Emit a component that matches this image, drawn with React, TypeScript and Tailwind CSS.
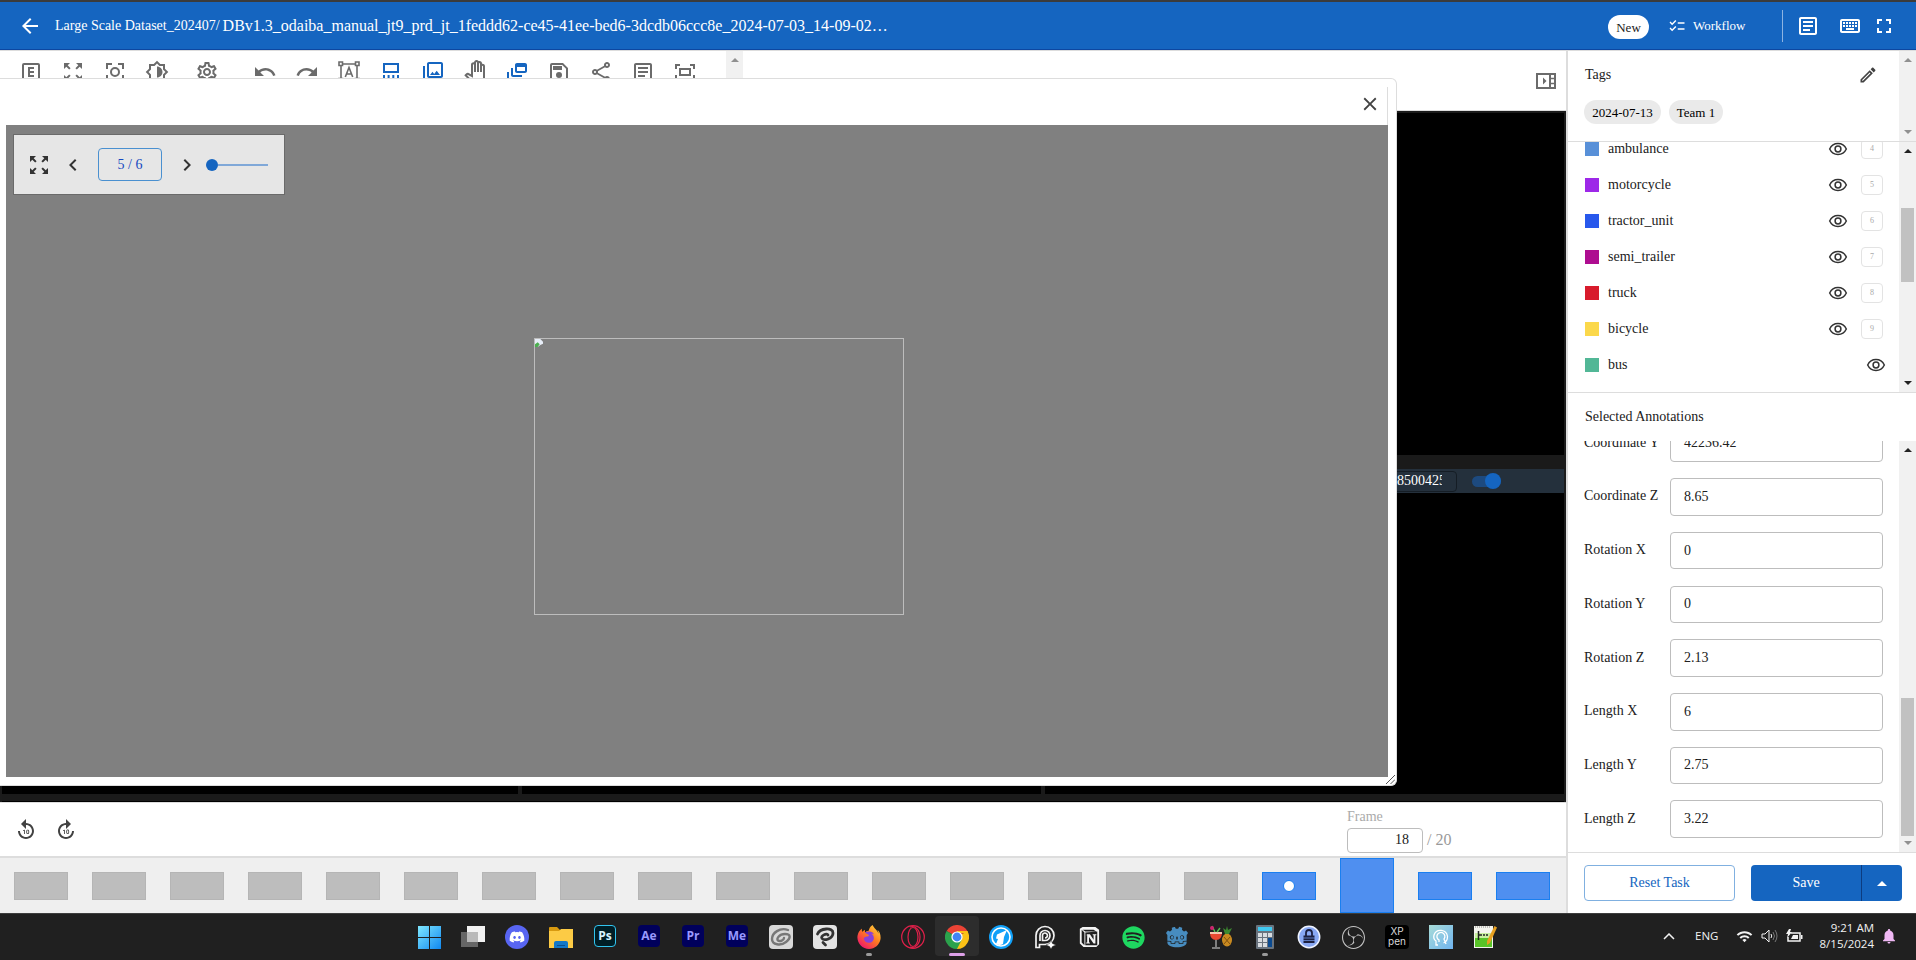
import React from "react";
import {
  MdArrowBack, MdChecklist, MdOutlineArticle, MdOutlineKeyboard, MdFullscreen, MdZoomOutMap,
  MdOutlineBrightness6, MdOutlineSettings, MdUndo, MdRedo, MdOutlinePhotoLibrary,
  MdOutlinePanTool, MdOutlineDynamicFeed, MdOutlineShare, MdClose, MdChevronLeft, MdChevronRight,
  MdForward10, MdReplay10, MdNotifications, MdWifi,
} from "react-icons/md";
import { FaDiscord, FaSpotify } from "react-icons/fa";
import { SiGodotengine, SiObsstudio, SiFirefoxbrowser } from "react-icons/si";

type Kids = { children?: React.ReactNode };

function Svg({ d, className = "size-6" }: { d: string; className?: string }) {
  return (
    <svg viewBox="0 0 24 24" className={className} fill="currentColor" fillRule="evenodd">
      <path d={d} />
    </svg>
  );
}

const BOX_E = "M9 7h6v2h-4v2h4v2h-4v2h4v2H9V7M5 3h14a2 2 0 0 1 2 2v14a2 2 0 0 1-2 2H5a2 2 0 0 1-2-2V5a2 2 0 0 1 2-2m0 2v14h14V5z";
const SAVE = "M5 3h11l5 5v11a2 2 0 0 1-2 2H5a2 2 0 0 1-2-2V5a2 2 0 0 1 2-2m0 2v14h14V8.8L15.200 5zM6 6h9v4H6zM12 12a3 3 0 1 1 0 6a3 3 0 0 1 0-6";
const VIEW_ROWS = "M4 3h16v10H4zm2 2v6h12V5zM4 15h2v6H4zM8.600 15h2v6h-2zM13.300 15h2v6h-2zM18 15h2v6h-2z";
const CENTER_RECT = "M2 4h5v2H4v3H2zM17 4h5v5h-2V6h-3zM2 15h2v3h3v2H2zM20 15h2v5h-5v-2h3zM6 8h12v8H6zm2 2v4h8v-4z";
const PENCIL = "M14.060 9l.94.940L5.920 19H5v-.920L14.060 9m3.600-6c-.250 0-.510.100-.700.290l-1.830 1.830l3.750 3.750l1.830-1.830c.390-.390.390-1.040 0-1.410l-2.340-2.340c-.200-.200-.450-.290-.710-.290m-3.600 3.190L3 17.250V21h3.750L17.810 9.940z";
const NOTION = "M2 3l3-2h14l4 3v16l-3 3H6l-4-4zm2 1v14l3 3V7zm4 3v14h13V6zm-3-3l3 2h12l-3-2zM10 9h3l4 6v-5h-1V9h4v1h-1v9h-2l-5-7v6h1v1h-4v-1h1v-8h-1z";

function Eye({ className }: { className: string }) {
  return (
    <svg viewBox="0 0 24 24" className={`size-5 shrink-0 text-[#333] ${className}`} fill="none" stroke="currentColor" strokeWidth="1.800">
      <path d="M2 12C4 7.700 7.700 5.400 12 5.400S20 7.700 22 12c-2 4.300-5.700 6.600-10 6.600S4 16.300 2 12z" />
      <circle cx="12" cy="12" r="3.500" />
    </svg>
  );
}

function Focus() {
  return (
    <svg viewBox="0 0 24 24" className="size-6" fill="none" stroke="currentColor" strokeWidth="2">
      <path d="M4 9V4h5M15 4h5v5M4 15v5h5M15 20h5v-5" />
      <circle cx="12" cy="12" r="4" />
    </svg>
  );
}

function TextBox() {
  return (
    <svg viewBox="0 0 24 24" className="size-6" fill="none" stroke="currentColor" strokeWidth="1.600">
      <path d="M2 2h3.500v3.500H2zM18.500 2H22v3.500h-3.500zM2 18.500h3.500V22H2zM18.500 18.500H22V22h-3.500zM5.500 4h13M5.500 20h13M4 5.500v13M20 5.500v13M8.300 17L12 7.500L15.700 17M9.500 14h5" />
    </svg>
  );
}

function Arrow({ down, dark }: { down?: boolean; dark?: boolean }) {
  return (
    <svg viewBox="0 0 8 4" className={`h-1 w-2 ${dark ? "text-[#222]" : "text-[#909090]"}`} fill="currentColor">
      <path d={down ? "M0 0h8L4 4z" : "M0 4h8L4 0z"} />
    </svg>
  );
}

function Slot({ w = "w-[42px]", blue, children }: Kids & { w?: string; blue?: boolean }) {
  return <div className={`flex shrink-0 justify-center ${w} ${blue ? "text-[#1565c0]" : "text-[#6b6b6b]"}`}>{children}</div>;
}

function Header() {
  return (
    <header className="flex h-[50px] shrink-0 items-center border-t-2 border-b border-t-[#3b3b3b] border-b-[#0d47a1] bg-[#1565c0] text-white">
      <MdArrowBack className="ml-[18px] size-6" />
      <span className="ml-[13px] text-[14px] whitespace-pre">Large Scale Dataset_202407/</span>
      <span className="ml-[3px] text-[16px]">DBv1.3_odaiba_manual_jt9_prd_jt_1feddd62-ce45-41ee-bed6-3dcdb06ccc8e_2024-07-03_14-09-02…</span>
      <div className="ml-auto flex items-center">
        <span className="mt-[3px] flex h-6 w-[41px] items-center justify-center rounded-full bg-white text-[13px] text-[#212121]">New</span>
        <MdChecklist className="ml-[19px] size-[18px]" />
        <span className="ml-[7px] w-[53px] text-[13px]">Workflow</span>
        <span className="ml-9 h-8 w-px bg-[#8db4e2]" />
        <MdOutlineArticle className="ml-[13px] size-6" />
        <MdOutlineKeyboard className="ml-[18px] size-6" />
        <MdFullscreen className="mr-5 ml-[10px] size-6" />
      </div>
    </header>
  );
}

function Toolbar() {
  return (
    <div className="flex h-[60px] shrink-0 justify-between border-b border-[#ddd]">
      <div className="flex h-full">
        <div className="flex w-[726px] pt-[9px] pl-[10px]">
          <Slot><Svg d={BOX_E} /></Slot>
          <Slot><MdZoomOutMap className="size-6" /></Slot>
          <Slot><Focus /></Slot>
          <Slot><MdOutlineBrightness6 className="size-6" /></Slot>
          <Slot w="w-[58px]"><MdOutlineSettings className="size-6" /></Slot>
          <Slot w="w-[58px]"><MdUndo className="size-6" /></Slot>
          <Slot w="w-[26px]"><MdRedo className="size-6 shrink-0" /></Slot>
          <Slot w="w-[58px]"><TextBox /></Slot>
          <Slot w="w-[26px]" blue><Svg d={VIEW_ROWS} className="size-6 shrink-0" /></Slot>
          <Slot w="w-[58px]" blue><MdOutlinePhotoLibrary className="size-6" /></Slot>
          <Slot w="w-[26px]"><MdOutlinePanTool className="size-6 shrink-0" /></Slot>
          <Slot w="w-[58px]" blue><MdOutlineDynamicFeed className="size-6" /></Slot>
          <Slot w="w-[26px]"><Svg d={SAVE} className="size-6 shrink-0" /></Slot>
          <Slot w="w-[58px]"><MdOutlineShare className="size-6" /></Slot>
          <Slot w="w-[26px]"><MdOutlineArticle className="size-6 shrink-0" /></Slot>
          <Slot w="w-[58px]"><Svg d={CENTER_RECT} /></Slot>
        </div>
        <div className="flex w-[17px] justify-center bg-[#f1f1f1] pt-[7px]"><Arrow /></div>
      </div>
      <svg viewBox="0 0 20 16" className="mt-[22px] mr-[10px] h-4 w-5" fill="none" stroke="#6b6b6b" strokeWidth="2">
        <path d="M1 1h18v14H1zM14 1v14" />
        <path d="M14 5.500h5M14 10.500h5" strokeWidth="1.500" />
        <path d="M7 4.500v7L10.500 8z" fill="#6b6b6b" stroke="none" />
      </svg>
    </div>
  );
}

function Viewer() {
  return (
    <div className="flex flex-1 flex-col border-2 border-b-0 border-[#1b1b1b] bg-black">
      <div className="h-[342px]" />
      <div className="h-[14px] bg-[#1a1a1a]" />
      <div className="flex h-6 items-center justify-end bg-[#24303c] pr-[63px]">
        <div className="flex h-[21px] w-[86px] items-center rounded border border-[#151d25] pr-[14px] text-[14px] text-white">
          <div className="flex w-full justify-end overflow-hidden whitespace-nowrap"><span className="-mr-[4px]">18500425</span></div>
        </div>
        <div className="ml-[15px] flex h-[11px] w-[29px] items-center justify-end rounded-full bg-[#1d4a7f]">
          <span className="size-4 shrink-0 rounded-full bg-[#1565c0]" />
        </div>
      </div>
      <div className="flex flex-1 pl-[516px]">
        <div className="w-1 bg-[#1a1a1a]" />
        <div className="ml-[519px] w-1 bg-[#1a1a1a]" />
      </div>
      <div className="h-[7px] bg-[#1a1a1a]" />
      <div className="h-px bg-black" />
    </div>
  );
}

function Timeline() {
  return (
    <>
      <div className="flex h-[54px] shrink-0 items-center border-t border-[#ddd]">
        <MdReplay10 className="ml-[14px] size-6 text-[#424242]" />
        <MdForward10 className="ml-4 size-6 text-[#424242]" />
        <div className="mt-[3px] ml-auto w-[219px] text-[14px] leading-none text-[#aaa]">
          <div>Frame</div>
          <div className="mt-1 flex items-center text-[16px] text-[#999]">
            <div className="flex h-[25px] w-[76px] items-center justify-end rounded border border-[#bdbdbd] pr-[13px] text-[14px] text-[#212121]">18</div>
            <span className="ml-1">/ 20</span>
          </div>
        </div>
      </div>
      <div className="flex h-[57px] shrink-0 items-center gap-6 border-t-2 border-[#ddd] bg-[#efefef] pl-[14px]">
        {Array.from({ length: 20 }, (_, i) => (
          <div
            key={i}
            className={`flex w-[54px] shrink-0 items-center justify-center border ${i === 17 ? "h-[55px]" : "h-7"} ${i < 16 ? "border-[#b5b5b5] bg-[#bdbdbd]" : "border-[#1a7ff0] bg-[#4f8ff0]"}`}
          >
            {i === 16 && <span className="size-3 rounded-full border border-[#1a7ff0] bg-white" />}
          </div>
        ))}
      </div>
    </>
  );
}

function PreviewDialog() {
  return (
    <section className="absolute top-[78px] left-0 flex h-[708px] w-[1397px] flex-col rounded-r-md border border-l-0 border-[#ddd] bg-white pr-2 pb-2 pl-[6px]">
      <div className="mt-2 flex h-[38px] items-center justify-end border-r border-[#ddd] pr-[6px]">
        <MdClose className="mb-[4px] size-[22px] text-[#424242]" />
      </div>
      <div className="flex flex-1 flex-col bg-[#808080] pt-[9px] pl-[7px]">
        <div className="flex h-[61px] w-[272px] items-center border border-[#6a6a6a] bg-[#e6e6e6] text-[#333]">
          <MdZoomOutMap className="ml-[13px] size-6" />
          <MdChevronLeft className="ml-[10px] size-6" />
          <div className="ml-[13px] flex h-[33px] w-16 items-center justify-center rounded border border-[#4a90d0] text-[14px] text-[#1448c0]">5 / 6</div>
          <MdChevronRight className="ml-[13px] size-6" />
          <span className="ml-[7px] size-3 rounded-full bg-[#1565c0]" />
          <span className="h-[2px] w-[50px] bg-[#80a8d8]" />
        </div>
        <div className="mt-[143px] ml-[521px] h-[277px] w-[370px] border border-[#bdbdbd]">
          <svg viewBox="0 0 12 12" className="size-2">
            <path d="M0 0h8l4 4v3L8 9l-4 3H0z" fill="#e8eef8" />
            <path d="M0 12V8l4-3 3 3-3 4z" fill="#4caf50" />
          </svg>
        </div>
      </div>
      <svg viewBox="0 0 9 9" className="absolute right-[1px] bottom-[1px] size-[9px]" stroke="#555"><path d="M0 9L9 0M4.500 9L9 4.500" /></svg>
    </section>
  );
}

const LABELS: { name: string; color: string; key?: number }[] = [
  { name: "ambulance", color: "bg-[#5890d8]", key: 4 },
  { name: "motorcycle", color: "bg-[#9d28e8]", key: 5 },
  { name: "tractor_unit", color: "bg-[#2858ec]", key: 6 },
  { name: "semi_trailer", color: "bg-[#ae0d90]", key: 7 },
  { name: "truck", color: "bg-[#d81b2c]", key: 8 },
  { name: "bicycle", color: "bg-[#fbd84b]", key: 9 },
  { name: "bus", color: "bg-[#52b796]" },
];

const FIELDS = [
  ["Coordinate Y", "42236.42"], ["Coordinate Z", "8.65"], ["Rotation X", "0"], ["Rotation Y", "0"],
  ["Rotation Z", "2.13"], ["Length X", "6"], ["Length Y", "2.75"], ["Length Z", "3.22"],
];

function Scrollbar({ dark, thumb, downDark }: { dark?: boolean; thumb?: string; downDark?: boolean }) {
  return (
    <div className="flex w-[17px] shrink-0 flex-col items-center bg-[#f1f1f1] py-[7px]">
      <Arrow dark={dark} />
      {thumb && <div className={`w-[13px] bg-[#c1c1c1] ${thumb}`} />}
      <div className="mt-auto"><Arrow down dark={downDark} /></div>
    </div>
  );
}

function Sidebar() {
  return (
    <aside className="flex w-[350px] shrink-0 flex-col border-l-2 border-[#ddd] text-[14px] text-[#212121]">
      <div className="flex h-[91px] shrink-0 border-b border-[#ddd]">
        <div className="flex-1 pt-3 pl-4">
          <div className="flex h-6 items-center justify-between pr-[21px] pl-[1px]">
            Tags
            <Svg d={PENCIL} className="size-5 text-[#424242]" />
          </div>
          <div className="mt-[13px] flex gap-2 text-[13px] text-black">
            <span className="flex h-6 w-[77px] items-center justify-center rounded-full bg-[#eaeaea]">2024-07-13</span>
            <span className="flex h-6 w-[54px] items-center justify-center rounded-full bg-[#eaeaea]">Team 1</span>
          </div>
        </div>
        <Scrollbar />
      </div>
      <div className="flex h-[251px] shrink-0 border-b border-[#ddd]">
        <div className="flex flex-1 flex-col justify-start overflow-hidden">
          <div className="-mt-[11px]">
            {LABELS.map((l) => (
              <div key={l.name} className="flex h-9 items-center pr-4 pl-[17px]">
                <span className={`size-[14px] ${l.color}`} />
                <span className="ml-[9px]">{l.name}</span>
                <Eye className={`ml-auto ${l.key ? "mr-[13px]" : "-mr-[3px]"}`} />
                {l.key && <span className="flex h-5 w-[22px] items-center justify-center rounded border border-[#e3e3e3] text-[8px] text-[#aaa]">{l.key}</span>}
              </div>
            ))}
          </div>
        </div>
        <Scrollbar dark downDark thumb="mt-[55px] h-[74px]" />
      </div>
      <div className="flex h-12 shrink-0 items-center pl-[17px]">Selected Annotations</div>
      <div className="flex h-[412px] shrink-0 border-b border-[#ddd]">
        <div className="flex-1 overflow-hidden">
          <div className="-mt-[16.500px] flex flex-col gap-[16.100px]">
            {FIELDS.map(([label, value]) => (
              <div key={label} className="flex h-[37.600px] items-center pl-4">
                <span className="w-[86px] pb-px">{label}</span>
                <div className="flex h-full w-[213px] items-center rounded border border-[#bdbdbd] pl-[13px]">{value}</div>
              </div>
            ))}
          </div>
        </div>
        <Scrollbar dark thumb="mt-[246px] h-[138px]" />
      </div>
      <div className="flex flex-1 items-start pt-3 pl-4">
        <button className="h-9 w-[151px] rounded border border-[#80b0e0] text-[#1565c0]">Reset Task</button>
        <div className="ml-4 flex h-9 w-[151px] items-stretch rounded bg-[#1565c0] text-white">
          <button className="w-[110px]">Save</button>
          <button className="flex flex-1 items-center justify-center border-l border-[#0d3c80]">
            <svg viewBox="0 0 10 5" className="h-[5px] w-[10px]" fill="white"><path d="M0 5h10L5 0z" /></svg>
          </button>
        </div>
      </div>
    </aside>
  );
}

function TaskIcon({ children, run }: Kids & { run?: "active" | "idle" }) {
  return (
    <div className={`flex h-10 w-11 shrink-0 flex-col items-center pt-[9px] ${run === "active" ? "rounded bg-[#2d2d2d]" : ""}`}>
      <div className="flex h-6 items-center">{children}</div>
      {run === "active" && <span className="mt-1 h-[3px] w-4 rounded-full bg-[#dda0e8]" />}
      {run === "idle" && <span className="mt-1 h-[3px] w-[6px] rounded-full bg-[#9a9a9a]" />}
    </div>
  );
}

function Adobe({ t, ps }: { t: string; ps?: boolean }) {
  return (
    <span className={`mb-[2px] flex size-[22px] items-center justify-center rounded-[4px] font-['Open_Sans',sans-serif] text-[12px] leading-none font-bold ${ps ? "border-[1.500px] border-[#31c5f0] bg-[#001e26] text-[#d8f4ff]" : "bg-[#00005b] text-[#9999ff]"}`}>{t}</span>
  );
}

function Taskbar() {
  return (
    <footer className="flex h-[47px] shrink-0 border-t border-[#3d3d3d] bg-[#202020] pt-[2px] pl-[407px] font-['Open_Sans',sans-serif]">
      <TaskIcon>
        <svg viewBox="0 0 23 23" className="size-[23px]">
          <defs><linearGradient id="win" x1="0" y1="0" x2="1" y2="1"><stop stopColor="#7fe8ff" /><stop offset="1" stopColor="#1088f0" /></linearGradient></defs>
          <path d="M0 0h11v11H0zM12 0h11v11H12zM0 12h11v11H0zM12 12h11v11H12z" fill="url(#win)" />
        </svg>
      </TaskIcon>
      <TaskIcon>
        <svg viewBox="0 0 24 24" className="size-6"><path d="M0 7h17v15H0z" fill="#666" /><path d="M6 1h18v16H6z" fill="#f2f2f2" /><path d="M6 7h11v10H6z" fill="#b9b9b9" /></svg>
      </TaskIcon>
      <TaskIcon><span className="flex size-6 items-center justify-center rounded-full bg-[#5865f2]"><FaDiscord className="size-4 text-white" /></span></TaskIcon>
      <TaskIcon>
        <svg viewBox="0 0 24 24" className="size-6"><path d="M0 3q0-1 1-1h7l3 3v3H0z" fill="#d89a10" /><path d="M0 6h10l2-2h12v19H0z" fill="#fccb45" /><path d="M5 23v-5q0-2 2-2h10q2 0 2 2v5z" fill="#1277c8" /><path d="M8 20h8v1H8z" fill="#0a4f90" /></svg>
      </TaskIcon>
      <TaskIcon><Adobe t="Ps" ps /></TaskIcon>
      <TaskIcon><Adobe t="Ae" /></TaskIcon>
      <TaskIcon><Adobe t="Pr" /></TaskIcon>
      <TaskIcon><Adobe t="Me" /></TaskIcon>
      <TaskIcon>
        <svg viewBox="0 0 24 24" className="size-6"><rect width="24" height="24" rx="4" fill="#d8d8d8" /><path d="M19 5C11 2 3 8 3 14s9 7 14 3s5-8-1-8s-9 5-7 6.500s6-.5 6-2.500" fill="none" stroke="#777" strokeWidth="2.400" strokeLinecap="round" /></svg>
      </TaskIcon>
      <TaskIcon>
        <svg viewBox="0 0 24 24" className="size-6"><rect width="24" height="24" rx="4" fill="#e4e4e4" /><path d="M4.500 9C7 3 20 2 20 8s-9 8-11 5.500s5-6 6-3.500M10 17.500l2.500 2.500" fill="none" stroke="#333" strokeWidth="2.800" strokeLinecap="round" /></svg>
      </TaskIcon>
      <TaskIcon run="idle">
        <svg viewBox="0 0 24 24" className="size-6">
          <defs><linearGradient id="fox" x1="1" y1="0" x2=".2" y2="1"><stop stopColor="#ffe040" /><stop offset=".5" stopColor="#ff7a20" /><stop offset="1" stopColor="#f01070" /></linearGradient></defs>
          <circle cx="12" cy="13" r="7" fill="#8a40d8" />
          <SiFirefoxbrowser size={24} fill="url(#fox)" />
        </svg>
      </TaskIcon>
      <TaskIcon>
        <svg viewBox="0 0 24 24" className="size-6" fill="none" stroke="#e0204a" strokeWidth="1.200"><circle cx="12" cy="12" r="11.300" /><ellipse cx="12" cy="12" rx="5" ry="9.500" /><path d="M9 2c5-2 10 3 10 10s-5 12-10 10" /></svg>
      </TaskIcon>
      <TaskIcon run="active">
        <svg viewBox="0 0 24 24" className="size-6">
          <path d="M12 12L1.600 6A12 12 0 0 1 22.400 6z" fill="#ea4335" />
          <path d="M12 12L22.400 6A12 12 0 0 1 12 24z" fill="#fbc116" />
          <path d="M12 12L16.800 14.600L12 24A12 12 0 0 1 1.600 6z" fill="#2ba24c" />
          <path d="M12 6h10.400A12 12 0 0 1 23 8H12z" fill="#fbc116" />
          <circle cx="12" cy="12" r="5.600" fill="white" /><circle cx="12" cy="12" r="4.400" fill="#4285f4" />
        </svg>
      </TaskIcon>
      <TaskIcon>
        <svg viewBox="0 0 24 24" className="size-6"><circle cx="12" cy="12" r="12" fill="#10a0f8" /><circle cx="12" cy="12" r="9" fill="none" stroke="white" strokeWidth="1.600" /><path d="M18 5L8 9.500l-1 4l2 .5l-2 5q4 2 7 0l1-7z" fill="white" /></svg>
      </TaskIcon>
      <TaskIcon>
        <svg viewBox="0 0 24 24" className="size-6" fill="none" stroke="#f2f2f2" strokeWidth="1.700"><path d="M3 22.500V10.500a9 9 0 1 1 9 9H6.500v3zM7 16V10.500a5 5 0 1 1 5 5H9.500V11a2.500 2.500 0 1 1 2.500 2" /><path d="M18 15l1.500 3.500L23 20l-3.500 1.500L18 24l-1.500-2.500L13 20l3.500-1.500z" fill="#fff" stroke="#202020" strokeWidth=".5" /></svg>
      </TaskIcon>
      <TaskIcon><Svg d={NOTION} className="size-[22px] text-[#f4f4f4]" /></TaskIcon>
      <TaskIcon><FaSpotify className="size-[23px] text-[#1ed760]" /></TaskIcon>
      <TaskIcon><SiGodotengine className="size-[22px] text-[#478cbf]" /></TaskIcon>
      <TaskIcon>
        <svg viewBox="0 0 24 24" className="size-6">
          <ellipse cx="18" cy="15" rx="5" ry="6.500" fill="#c98a20" /><path d="M14 3l3 2l1-4l1 4l4-2l-3 6h-4z" fill="#3d8a30" /><path d="M15 12l6 7M21 12l-6 7" stroke="#805010" />
          <path d="M1 7h12q0 8-6 8T1 7z" fill="#e84a30" /><path d="M1 7h12v2H1z" fill="#f4c8b0" /><path d="M7 15v7M3 23h8" stroke="#ddd" /><path d="M3 1l3 6M8 7l3-4" stroke="#50c050" strokeWidth="1.500" /><circle cx="3" cy="3" r="2" fill="#d02070" />
        </svg>
      </TaskIcon>
      <TaskIcon run="idle">
        <svg viewBox="0 0 24 24" className="size-6"><rect x="3" width="18" height="24" rx="1" fill="#69737e" /><path d="M5 2h14v4H5z" fill="#40c8f0" /><path d="M5 8h4v4H5zM10 8h4v4h-4zM15 8h4v4h-4zM5 13h4v4H5zM10 13h4v4h-4zM5 18h4v4H5zM10 18h4v4h-4z" fill="#d8dce0" /><path d="M15 13h4v9h-4z" fill="#0a4a90" /></svg>
      </TaskIcon>
      <TaskIcon>
        <svg viewBox="0 0 24 24" className="size-6"><circle cx="12" cy="12" r="10.700" fill="#88a8f4" stroke="#f0f4ff" strokeWidth="1.500" /><path d="M6.500 10.500h11v7.500h-11z" fill="#1c2040" /><path d="M9 11V8a3 3 0 0 1 6 0v3" fill="none" stroke="#1c2040" strokeWidth="1.800" /><path d="M6 13h12M6 15.500h12" stroke="#7aa0f0" strokeWidth=".7" /></svg>
      </TaskIcon>
      <TaskIcon><SiObsstudio className="size-[23px] text-[#c4c4c4]" /></TaskIcon>
      <TaskIcon><span className="flex size-6 flex-col items-center justify-center rounded bg-black font-['Inter',sans-serif] text-[10px] leading-[10px] text-[#d8d8d8]"><span className="-mt-px h-[10px]">XP</span><span className="h-[11px]">pen</span></span></TaskIcon>
      <TaskIcon>
        <svg viewBox="0 0 24 24" className="size-6">
          <defs><linearGradient id="head" x1="0" y1="0" x2="1" y2="1"><stop stopColor="#a8dcd8" /><stop offset="1" stopColor="#70b4f0" /></linearGradient></defs>
          <path d="M0 0h24v24H0z" fill="url(#head)" /><path d="M9 20H7v-4q-3-2-2-6a7 7 0 0 1 13.500 1.500q0 5-4 6.500M10 17v-2a4 4 0 1 1 5-1l2 5" fill="none" stroke="#fff" strokeWidth="1.300" />
        </svg>
      </TaskIcon>
      <TaskIcon>
        <svg viewBox="0 0 24 24" className="size-6"><path d="M1 1h19v22H1z" fill="#f4f4ee" /><path d="M2 8h17v14H2z" fill="#c8f0a0" /><path d="M2 13h17v9H2z" fill="#58c428" /><path d="M5.500 6v9M6 10h3M10 10h2M13 10h2" stroke="#222" strokeWidth="1.500" /><path d="M2 2h16" stroke="#888" strokeDasharray="1 1" /><path d="M21.500 1L24 2.500L17 18l-3 2v-4z" fill="#e8a020" /></svg>
      </TaskIcon>
      <div className="ml-auto flex h-10 items-center text-[#f2f2f2]">
        <svg viewBox="0 0 12 7" className="h-[7px] w-3" fill="none" stroke="currentColor" strokeWidth="1.500"><path d="M1 6l5-5l5 5" /></svg>
        <span className="ml-[20px] w-[24px] text-[11.500px]">ENG</span>
        <MdWifi className="ml-[17px] size-[17px]" />
        <svg viewBox="0 0 17 14" className="ml-2 h-[14px] w-[17px]" fill="none" stroke="currentColor"><path d="M1 5h3l4-4v12L4 9H1zM10 5q1.500 2 0 4" /><path d="M12 3q3 4 0 8M14 1q4 6 0 12" stroke="#777" /></svg>
        <svg viewBox="0 0 17 14" className="ml-2 h-[14px] w-[17px]"><path d="M5 4h9v8H2V8" fill="none" stroke="currentColor" strokeWidth="1.500" /><path d="M7 6h5v4H5zM15 6h1.500v4H15zM3 0L0 5h2L1 9l5-6H4l1-3z" fill="currentColor" /></svg>
        <div className="ml-[14px] w-[57px] text-right text-[11.500px] leading-4 whitespace-nowrap"><div>9:21 AM</div><div>8/15/2024</div></div>
        <MdNotifications className="mr-[18px] ml-[6px] size-[18px] text-[#f0b8f4]" />
      </div>
    </footer>
  );
}

export default function App() {
  return (
    <div className="relative flex h-[960px] w-[1916px] flex-col overflow-hidden bg-white font-['Liberation_Serif',serif] leading-none">
      <Header />
      <div className="flex h-[863px] shrink-0 border-t border-[#ddd]">
        <main className="flex min-w-0 flex-1 flex-col">
          <Toolbar />
          <Viewer />
          <Timeline />
        </main>
        <Sidebar />
      </div>
      <Taskbar />
      <PreviewDialog />
    </div>
  );
}
